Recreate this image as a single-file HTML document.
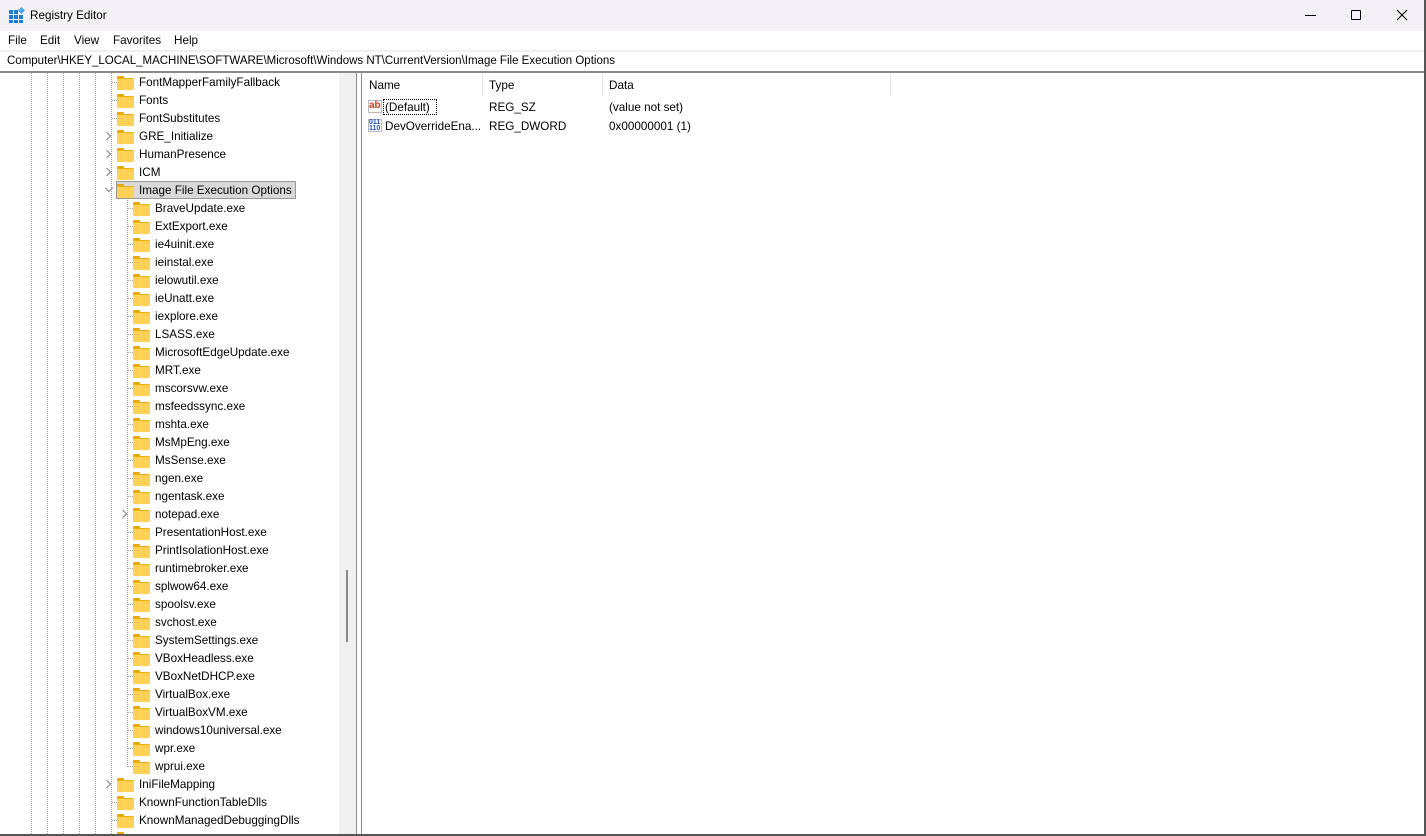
<!DOCTYPE html>
<html><head><style>
*{margin:0;padding:0;box-sizing:border-box}
html,body{width:1426px;height:836px;overflow:hidden}
body{background:#fff;font-family:"Liberation Sans",sans-serif;font-size:11.7px;color:#000;position:relative}
.a{position:absolute;white-space:nowrap}
.vl{position:absolute;width:0;border-left:1px dotted #a0a0a0}
.hl{position:absolute;height:0;border-top:1px dotted #a0a0a0}
.f{position:absolute;width:17px;height:13px}
.f:before{content:"";position:absolute;left:0;top:0;width:7px;height:3px;background:#e8a800;border-radius:1px 1px 0 0}
.f:after{content:"";position:absolute;left:0;top:2px;width:17px;height:11px;background:#ffd257;border-top:1px solid #f0b000;border-radius:1px}
.ch{position:absolute;width:6px;height:6px;border-right:1px solid #808080;border-bottom:1px solid #808080}
#tree{position:absolute;left:0;top:73px;width:339px;height:761px;overflow:hidden}
</style></head><body>
<div class="a" style="left:0;top:0;width:1426px;height:31px;background:#f3f1f6"></div>
<svg class="a" style="left:8px;top:7px" width="17" height="17" viewBox="0 0 17 17"><g fill="#1e7bd6"><rect x="1" y="3" width="4" height="4"/><rect x="6" y="3" width="4" height="4"/><rect x="1" y="8" width="4" height="4"/><rect x="6" y="8" width="4" height="4"/><rect x="11" y="8" width="4" height="4"/><rect x="1" y="13" width="4" height="3"/><rect x="6" y="13" width="4" height="3"/><rect x="11" y="13" width="4" height="3"/></g><rect x="11" y="1" width="5" height="5" fill="#4aa8f0" transform="rotate(45 13.5 3.5)"/></svg>
<div class="a" style="left:30px;top:9px">Registry Editor</div>
<div class="a" style="left:1305px;top:15px;width:11px;border-top:1px solid #000"></div>
<div class="a" style="left:1351px;top:10px;width:10px;height:10px;border:1px solid #000;border-radius:1px"></div>
<svg class="a" style="left:1396px;top:9px" width="12" height="12"><path d="M1 1L11 11M11 1L1 11" stroke="#000" stroke-width="1.1"/></svg>
<div class="a" style="left:8px;top:34px">File</div>
<div class="a" style="left:40px;top:34px">Edit</div>
<div class="a" style="left:74px;top:34px">View</div>
<div class="a" style="left:113px;top:34px">Favorites</div>
<div class="a" style="left:174px;top:34px">Help</div>
<div class="a" style="left:0;top:50px;width:1426px;height:2px;background:#f0f0f0"></div>
<div class="a" style="left:7px;top:55px;font-size:11.5px">Computer\HKEY_LOCAL_MACHINE\SOFTWARE\Microsoft\Windows NT\CurrentVersion\Image File Execution Options</div>
<div class="a" style="left:0;top:71px;width:1426px;height:2px;background:#8a8a8a"></div>
<div class="a" style="left:339px;top:73px;width:17px;height:763px;background:#f0f0f0"></div>
<div class="a" style="left:346px;top:570px;width:2px;height:72px;background:#8a8a8a"></div>
<div class="a" style="left:356px;top:73px;width:1px;height:763px;background:#8a8a8a"></div>
<div class="a" style="left:361px;top:73px;width:1px;height:763px;background:#8a8a8a"></div>
<div class="a" style="left:1424px;top:0;width:2px;height:836px;background:#555"></div>
<div class="a" style="left:0;top:834px;width:1426px;height:2px;background:#555"></div>
<div id="tree">
<div class="vl" style="left:31px;top:0;height:761px"></div>
<div class="vl" style="left:47px;top:0;height:761px"></div>
<div class="vl" style="left:63px;top:0;height:761px"></div>
<div class="vl" style="left:79px;top:0;height:761px"></div>
<div class="vl" style="left:95px;top:0;height:761px"></div>
<div class="vl" style="left:111px;top:0;height:761px"></div>
<div class="vl" style="left:127px;top:127px;height:567px"></div>
<div id="t"></div>
</div>
<div class="a" style="left:369px;top:79px">Name</div>
<div class="a" style="left:482px;top:74px;width:1px;height:22px;background:#e5e5e5"></div>
<div class="a" style="left:489px;top:79px">Type</div>
<div class="a" style="left:602px;top:74px;width:1px;height:22px;background:#e5e5e5"></div>
<div class="a" style="left:609px;top:79px">Data</div>
<div class="a" style="left:890px;top:74px;width:1px;height:22px;background:#e5e5e5"></div>
<div class="a" style="left:368px;top:100px;width:14px;height:13px;border:1px solid #bbb;background:#fff;color:#d04020;font-weight:bold;font-size:10px;line-height:10px">ab</div>
<div class="a" style="left:383px;top:99px;width:54px;height:16px;border:1px dotted #000"></div>
<div class="a" style="left:385px;top:101px">(Default)</div>
<div class="a" style="left:489px;top:101px">REG_SZ</div>
<div class="a" style="left:609px;top:101px">(value not set)</div>
<div class="a" style="left:368px;top:119px;width:14px;height:13px;border:1px solid #bbb;background:#fff;color:#2050c0;font-weight:bold;font-size:7px;line-height:6px">011<br>110</div>
<div class="a" style="left:385px;top:120px">DevOverrideEna...</div>
<div class="a" style="left:489px;top:120px">REG_DWORD</div>
<div class="a" style="left:609px;top:120px">0x00000001 (1)</div>
<script>
var L1a=[["FontMapperFamilyFallback",0],["Fonts",0],["FontSubstitutes",0],["GRE_Initialize",1],["HumanPresence",1],["ICM",1],["Image File Execution Options",2]];
var L2=["BraveUpdate.exe","ExtExport.exe","ie4uinit.exe","ieinstal.exe","ielowutil.exe","ieUnatt.exe","iexplore.exe","LSASS.exe","MicrosoftEdgeUpdate.exe","MRT.exe","mscorsvw.exe","msfeedssync.exe","mshta.exe","MsMpEng.exe","MsSense.exe","ngen.exe","ngentask.exe","notepad.exe","PresentationHost.exe","PrintIsolationHost.exe","runtimebroker.exe","splwow64.exe","spoolsv.exe","svchost.exe","SystemSettings.exe","VBoxHeadless.exe","VBoxNetDHCP.exe","VirtualBox.exe","VirtualBoxVM.exe","windows10universal.exe","wpr.exe","wprui.exe"];
var L1b=[["IniFileMapping",1],["KnownFunctionTableDlls",0],["KnownManagedDebuggingDlls",0],["",0]];
var h="",y=1;
function row1(n,c){
 if(c==0)h+='<div class="hl" style="left:112px;top:'+(y+8)+'px;width:5px"></div>';
 if(c==1)h+='<div class="ch" style="left:104px;top:'+(y+5)+'px;transform:rotate(-45deg)"></div>';
 if(c==2){h+='<div class="ch" style="left:106px;top:'+(y+3)+'px;transform:rotate(45deg)"></div>';h+='<div class="a" style="left:116px;top:'+(y-1)+'px;width:180px;height:18px;background:#d9d9d9;border:1px solid #999"></div>';}
 h+='<div class="f" style="left:117px;top:'+(y+2)+'px"></div><div class="a" style="left:139px;top:'+(y+2)+'px">'+n+'</div>';y+=18;}
L1a.forEach(function(r){row1(r[0],r[1])});
L2.forEach(function(n){
 if(n=="notepad.exe")h+='<div class="ch" style="left:120px;top:'+(y+5)+'px;transform:rotate(-45deg)"></div>';
 else h+='<div class="hl" style="left:128px;top:'+(y+8)+'px;width:5px"></div>';
 h+='<div class="f" style="left:133px;top:'+(y+2)+'px"></div><div class="a" style="left:155px;top:'+(y+2)+'px">'+n+'</div>';y+=18;});
L1b.forEach(function(r){row1(r[0],r[1])});
document.getElementById("t").innerHTML=h;
</script>
</body></html>
